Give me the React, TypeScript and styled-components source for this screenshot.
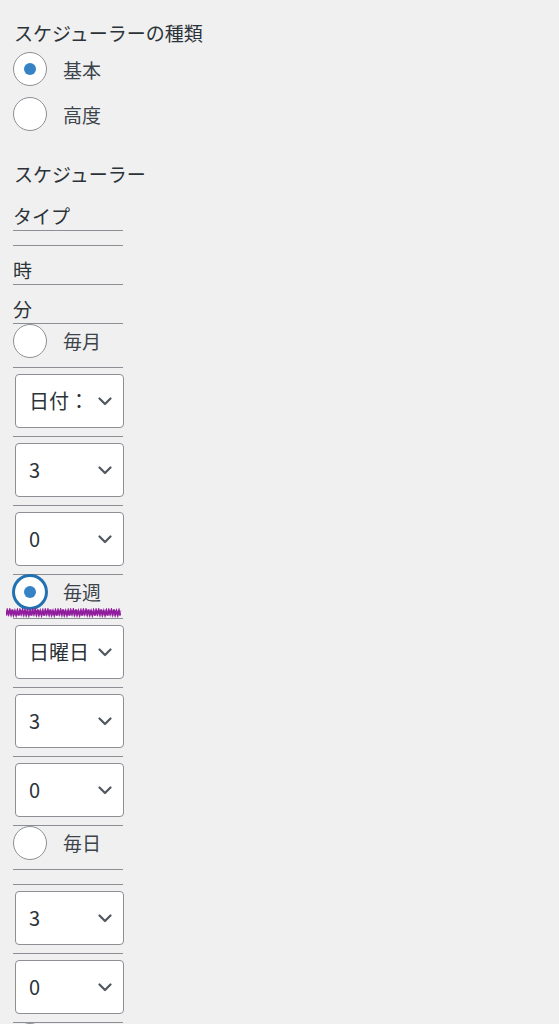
import React from 'react';
import styled, { createGlobalStyle } from 'styled-components';

const GlobalStyle = createGlobalStyle`
  body {
    margin: 0;
    background: #f0f0f1;
    font-family: "Noto Sans CJK JP", "Noto Sans", sans-serif;
    color: #3c434a;
  }
`;

type Row = {
  label: string;
  checked?: boolean;
  focused?: boolean;
  day?: string;
  hour: string;
  minute: string;
};

const rows: Row[] = [
  { label: '毎月', day: '日付：', hour: '3', minute: '0' },
  { label: '毎週', checked: true, focused: true, day: '日曜日', hour: '3', minute: '0' },
  { label: '毎日', hour: '3', minute: '0' },
];

const Chevron = () => (
  <svg width="14" height="9" viewBox="0 0 14 9" fill="none">
    <path d="M1.5 1.5 L7 7 L12.5 1.5" stroke="#50575e" strokeWidth="2.2" strokeLinecap="round" strokeLinejoin="round" />
  </svg>
);

// wavy purple underline, drawn over the row
const Squiggle = () => {
  const dark: string[] = [];
  const light: string[] = [];
  for (let i = 0; i <= 90; i++) {
    const x = i * 1.27;
    const j = ((i * 7) % 5) * 0.35;
    dark.push(`${x.toFixed(2)},${i % 2 ? 1.5 + j : 7.5 - j}`);
    light.push(`${(x + 0.6).toFixed(2)},${i % 2 ? 7 - j : 2.5 + j}`);
  }
  return (
    <SquiggleSvg width="116" height="10" viewBox="0 0 116 10">
      <rect x="1" y="2.5" width="113" height="5" fill="#b45ebd" opacity="0.45" />
      <polyline points={light.join(' ')} stroke="#c98ad0" strokeWidth="1.4" fill="none" />
      <polyline points={dark.join(' ')} stroke="#8f1d9c" strokeWidth="1.8" fill="none" />
    </SquiggleSvg>
  );
};

const Select = ({ value }: { value: string }) => (
  <SelectBox>
    <SelectText>{value}</SelectText>
    <Chevron />
  </SelectBox>
);

const Radio = ({ label, checked, focused }: { label: string; checked?: boolean; focused?: boolean }) => (
  <RadioLabel>
    <RadioCircle $focused={focused}>{checked && <RadioDot />}</RadioCircle>
    <span>{label}</span>
  </RadioLabel>
);

const App = () => (
  <>
    <GlobalStyle />
    <Wrapper>
      <Title>スケジューラーの種類</Title>
      <RadioGroup>
        <Radio label="基本" checked />
        <Radio label="高度" />
      </RadioGroup>

      <Heading>スケジューラー</Heading>

      <Table>
        <Cell>タイプ</Cell>
        <Cell />
        <Cell>時</Cell>
        <Cell>分</Cell>

        {rows.map((row) => (
          <React.Fragment key={row.label}>
            <Cell $kind="radio">
              <Radio label={row.label} checked={row.checked} focused={row.focused} />
              {row.focused && <Squiggle />}
            </Cell>
            {row.day ? (
              <Cell $kind="select">
                <Select value={row.day} />
              </Cell>
            ) : (
              <Cell />
            )}
            <Cell $kind="select">
              <Select value={row.hour} />
            </Cell>
            <Cell $kind="select">
              <Select value={row.minute} />
            </Cell>
          </React.Fragment>
        ))}

        {/* next row, only its radio top shows at the page edge */}
        <Cell $kind="radio">
          <RadioLabel>
            <RadioCircle />
          </RadioLabel>
        </Cell>
      </Table>
    </Wrapper>
  </>
);

const Wrapper = styled.div`
  padding: 20px 0 0 13px;
  height: 1024px;
  box-sizing: border-box;
  overflow: hidden;
`;

const Title = styled.h2`
  margin: 0;
  padding-left: 1px;
  font-size: 19px;
  font-weight: 400;
  line-height: 25px;
  color: #2c3338;
`;

const Heading = styled(Title)`
  margin-top: 30px;
`;

const RadioGroup = styled.div`
  margin-top: 7px;
  display: flex;
  flex-direction: column;
  gap: 11px;
`;

const RadioLabel = styled.label`
  display: flex;
  align-items: center;
  gap: 16px;
  height: 34px;
  font-size: 19px;
  color: #3c434a;
`;

const RadioCircle = styled.span<{ $focused?: boolean }>`
  box-sizing: border-box;
  width: 34px;
  height: 34px;
  flex: none;
  border-radius: 50%;
  background: #fff;
  border: ${(p) => (p.$focused ? '2px solid #2271b1' : '1px solid #8c8f94')};
  box-shadow: ${(p) => (p.$focused ? '0 0 0 1px #2271b1' : 'none')};
  display: flex;
  align-items: center;
  justify-content: center;
`;

const RadioDot = styled.span`
  width: 12px;
  height: 12px;
  border-radius: 50%;
  background: #3582c4;
`;

const Table = styled.div`
  margin-top: 6px;
  width: 110px;
  display: flex;
  flex-direction: column;
`;

const Cell = styled.div<{ $kind?: 'radio' | 'select' }>`
  position: relative;
  border-bottom: 1px solid #8c8f94;
  font-size: 19px;
  line-height: 24px;
  color: #2c3338;
  padding: ${(p) =>
    p.$kind === 'radio' ? '0 0 9px' : p.$kind === 'select' ? '6px 0 8px' : '12px 0 2px'};
`;

const SelectBox = styled.div`
  box-sizing: border-box;
  margin-left: 2px;
  width: 109px;
  height: 54px;
  display: flex;
  align-items: center;
  justify-content: space-between;
  padding: 0 11px 0 13px;
  gap: 2px;
  background: #fff;
  border: 1px solid #8c8f94;
  border-radius: 4px;
  font-size: 20px;
  line-height: 28px;
  color: #2c3338;
`;

const SelectText = styled.span`
  white-space: nowrap;
`;

const SquiggleSvg = styled.svg`
  position: absolute;
  left: -7px;
  top: 33px;
  z-index: 1;
`;

export default App;
